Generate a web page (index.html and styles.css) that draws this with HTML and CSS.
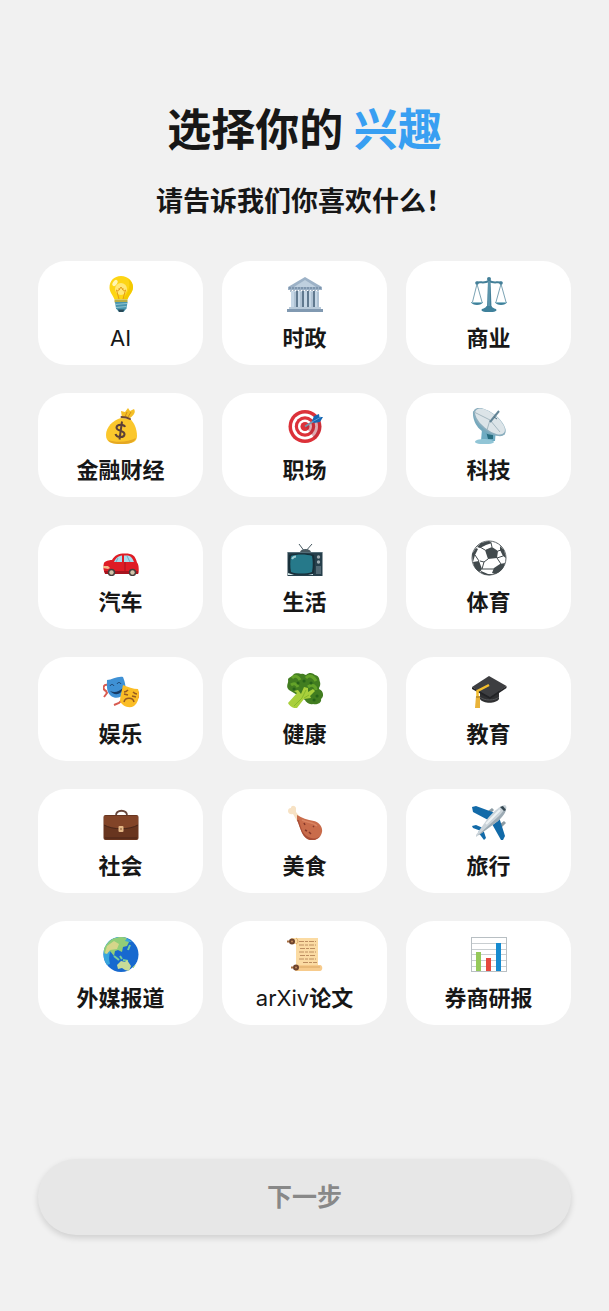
FILE: index.html
```
<!DOCTYPE html>
<html lang="zh-CN">
<head>
    <meta charset="UTF-8">
    <meta name="viewport" content="width=device-width, initial-scale=1.0">
    <title>选择你的兴趣</title>
    <link rel="stylesheet" href="styles.css">
</head>
<body>
    <main class="page">
        <header class="heading">
            <h1>选择你的 <span class="accent">兴趣</span></h1>
            <p>请告诉我们你喜欢什么！</p>
        </header>

        <div class="topics">
            <button type="button" class="topic">
                <svg viewBox="0 0 36 36" aria-hidden="true">
                    <path d="M18 0C11 0 6.500 5 6.500 11.500c0 5 3.500 7.500 5 12h13c1.500-4.500 5.500-7 5.500-12C30 5 25 0 18 0z" fill="#fdd515"/>
                    <path d="M25 3c3 5 1 13-5 20h4.500c1.500-4.500 5.500-7 5.500-12 0-3.500-2-6.500-5-8z" fill="#f3c900"/>
                    <ellipse cx="18" cy="13" rx="6" ry="6" fill="#ffe878"/>
                    <path d="M16 23l-2.500-9c2 2 3 0 2.500-2M20 23l2.500-9c-2 2-3 0-2.500-2M16 14l2-3 2 3" fill="none" stroke="#e59a16" stroke-width="1"/>
                    <ellipse cx="12" cy="7" rx="2" ry="3.500" transform="rotate(35 12 7)" fill="#fff6b5"/>
                    <path d="M11.500 23.500h13v3h-13z" fill="#b9ad45"/>
                    <path d="M12 26h12.500l-1 6.500-3 3.500h-4.500l-3-3.500z" fill="#4995ad"/>
                    <path d="M12 28.500l12-1M13 31.500l10.500-1" stroke="#91c5d2" stroke-width="1"/>
                    <path d="M15 33.500h6.500L20 36h-4z" fill="#294957"/>
                </svg>
                <span class="label"><span class="latin">AI</span></span>
            </button>
            <button type="button" class="topic">
                <svg viewBox="0 0 36 36" aria-hidden="true">
                    <path d="M18 1L1 11v3h34v-3z" fill="#9db2c7"/>
                    <path d="M18 4L7 11h22z" fill="#bfd0df"/>
                    <path d="M2 12h32M3 15h30" stroke="#617b94" stroke-width="1" stroke-dasharray="2 1"/>
                    <path d="M5 15h26v17H5z" fill="#60798f"/>
                    <path d="M4 15h5v17H4zM11 15h4v17h-4zM17 15h3v17h-3zM22 15h4v17h-4zM28 15h4v17h-4z" fill="#c6d7e6"/>
                    <path d="M8 16v15M14 16v15M25 16v15M31 16v15" stroke="#99aec2" stroke-width="1"/>
                    <path d="M2 31h32v2H2z" fill="#b8cada"/>
                    <path d="M0 33h36v3H0z" fill="#8199b1"/>
                </svg>
                <span class="label">时政</span>
            </button>
            <button type="button" class="topic">
                <svg viewBox="0 0 36 36" aria-hidden="true">
                    <path d="M6 8L1.500 26M6 8l5 18M30 8l-5 18M30 8l5 18" stroke="#7ba3b4" stroke-width="1" fill="none"/>
                    <path d="M0 26h12c-1 4-11 4-12 0zM24 26h12c-1 4-11 4-12 0z" fill="#3f819b"/>
                    <path d="M1 26.500h10M25 26.500h10" stroke="#8fbdcb" stroke-width="1"/>
                    <path d="M5 7c5-2 7 1 13-2 6 3 8 0 13 2" fill="none" stroke="#437f98" stroke-width="2"/>
                    <path d="M17 4h2.500l1 28h-4.500z" fill="#437f98"/>
                    <path d="M18 5v26" stroke="#75aabd" stroke-width="1"/>
                    <circle cx="18" cy="3" r="2" fill="#437f98"/>
                    <circle cx="6" cy="7" r="1.800" fill="#437f98"/>
                    <circle cx="30" cy="7" r="1.800" fill="#437f98"/>
                    <path d="M10.500 34c0-2 4-1 5-4h5c1 3 5 2 5 4 0 3-15 3-15 0z" fill="#3f819b"/>
                </svg>
                <span class="label">商业</span>
            </button>

            <button type="button" class="topic">
                <svg viewBox="0 0 36 36" aria-hidden="true">
                    <path d="M19 10L18 3l4 1 3-4 2 3 4-2c2 3 0 6-4 9z" fill="#f4bf27"/>
                    <path d="M22 9l2-5M25 9l3-5" stroke="#d18e18" stroke-width="1"/>
                    <path d="M18 10c-8 2-15 9-15 17 0 7 5 9 15 9 11 0 16-2 16-8 0-7-3-14-7-17z" fill="#fbc72c"/>
                    <path d="M5 32c8 3 21 2 28-2-2 5-7 6-15 6-7 0-11-1-13-4z" fill="#e5a823"/>
                    <path d="M18.500 9c3 0 6 .5 8.500 2" stroke="#704a35" stroke-width="2" stroke-linecap="round" fill="none"/>
                    <path d="M22 19c-1-3-8-3-8.500.5C13 23.500 22 22 21.500 26.500 21 30 13.500 30 12.500 26M19 13.500l-2.500 18" fill="none" stroke="#5d4037" stroke-width="2"/>
                </svg>
                <span class="label">金融财经</span>
            </button>
            <button type="button" class="topic">
                <svg viewBox="0 0 36 36" aria-hidden="true">
                    <circle cx="18" cy="18.500" r="16.500" fill="#dc3139"/>
                    <circle cx="18" cy="18.500" r="13" fill="#fff"/>
                    <circle cx="18" cy="18.500" r="10.200" fill="#dc3139"/>
                    <circle cx="18" cy="18.500" r="7" fill="#fff"/>
                    <circle cx="18" cy="18.500" r="4.500" fill="#dc3139"/>
                    <path d="M18 18l10 13 4-5c2-4 3-8 1-11l-6-2z" fill="#a52a3d" opacity=".4"/>
                    <path d="M18 18.500L30 11" stroke="#7894aa" stroke-width="2"/>
                    <path d="M25 13l2-5 5-2 .5 3H36l-3 5-6 1z" fill="#1667b2"/>
                    <path d="M25 14l9-5" stroke="#549bd6" stroke-width="1"/>
                </svg>
                <span class="label">职场</span>
            </button>
            <button type="button" class="topic">
                <svg viewBox="0 0 36 36" aria-hidden="true">
                    <path d="M11 21h14l-1 12H10z" fill="#6eabc2"/>
                    <path d="M15 23h7v8h-5z" fill="#276c7f"/>
                    <path d="M4 34c0-2 4-3 9-3s9 1 10 3c-1 3-18 3-19 0z" fill="#91c5d6"/>
                    <path d="M2 3c-1 13 9 27 29 24 2 0 3-1 3-2z" fill="#76a9bd"/>
                    <ellipse cx="18.500" cy="14" rx="19.500" ry="9" transform="rotate(39 18.500 14)" fill="#8baebe"/>
                    <ellipse cx="19" cy="13.500" rx="18" ry="8" transform="rotate(39 19 13.500)" fill="#dce4e8"/>
                    <path d="M3 4l16 8 10 12M19 12l-3 10" fill="none" stroke="#a6b8c1" stroke-width="1"/>
                    <path d="M19 14l9-11" stroke="#648596" stroke-width="2"/>
                    <path d="M23 9l3 2" stroke="#4b6f81" stroke-width="1"/>
                </svg>
                <span class="label">科技</span>
            </button>

            <button type="button" class="topic">
                <svg viewBox="0 0 36 36" aria-hidden="true">
                    <path d="M1 23c1-2 5-3 8-3 3-5 6-6.500 13-6.500 8 0 10 2 12 9 2 2 2 8 1.500 11H3C0 32 0 26 1 23z" fill="#df1c25"/>
                    <path d="M11 22c2-4 4-6 8-6.500V22zM21 15.500c6-.5 8 1 10 6.500H21z" fill="#a7dcec"/>
                    <path d="M15 18l-2 4M24 16l3 6" stroke="#6bafc6" stroke-width="1"/>
                    <path d="M0 26h5l2 2-2 1-5-1z" fill="#f3ba8a"/>
                    <path d="M1 31h34v3H2z" fill="#a7131e"/>
                    <path d="M22 22v9" stroke="#a7131e" stroke-width="1"/>
                    <circle cx="8.500" cy="32.500" r="3.700" fill="#443f3d"/>
                    <circle cx="8.500" cy="32.500" r="2.200" fill="#d2c3a9"/>
                    <circle cx="29.500" cy="32.500" r="3.700" fill="#443f3d"/>
                    <circle cx="29.500" cy="32.500" r="2.200" fill="#d2c3a9"/>
                </svg>
                <span class="label">汽车</span>
            </button>
            <button type="button" class="topic">
                <svg viewBox="0 0 36 36" aria-hidden="true">
                    <path d="M12 4l6 8 7-8" fill="none" stroke="#485961" stroke-width="1"/>
                    <path d="M13 12c1-4 10-4 11 0z" fill="#485961"/>
                    <path d="M.500 12h35v24H.500z" fill="#263f4b"/>
                    <path d="M1 12.500h34" stroke="#546d78" stroke-width="1"/>
                    <path d="M2 15c6-2 19-2 25 0 1 6 1 12 0 18-6 2-19 2-25 0-1-6-1-12 0-18z" fill="#172e38"/>
                    <path d="M4 16c5-2 16-2 21 0 1 5 1 11 0 16-5 2-16 2-21 0-1-5-1-11 0-16z" fill="#26798a"/>
                    <path d="M5 19c1-2 2-2.500 4-2.500" stroke="#9bcbd1" stroke-width="2" fill="none"/>
                    <path d="M29 26h5v8h-5z" fill="#526974"/>
                    <circle cx="31.500" cy="17" r="1.700" fill="#a0adb2"/>
                    <circle cx="31.500" cy="22" r="1.700" fill="#a0adb2"/>
                    <path d="M1 33l6 2H1zM21 35l5-1v1z" fill="#d9edef"/>
                </svg>
                <span class="label">生活</span>
            </button>
            <button type="button" class="topic">
                <svg viewBox="0 0 36 36" aria-hidden="true">
                    <circle cx="18" cy="18" r="17" fill="#fff" stroke="#60676a" stroke-width="1"/>
                    <path d="M14 10l7-3 6 4-1 7-9 1zM10 3l8-2 3 2-6 2-6 3-3-1zM1 14l4-6 2 1-3 6-2 7zM29 6l4 4 2 8-3-2-3-6zM2 22l6-1 3 8-2 3c-4-2-6-5-7-10zM23 28l6-4 5-1c-1 5-4 9-10 11l-3-1zM10 31l7 3 6 .5c-5 1.500-10 .5-13-2z" fill="#424a4d"/>
                    <path d="M14 10l-5-3M21 7l-1-4M27 11l3-1M26 18l4 6M17 19l-4 3-4-1M13 22l-2 7M26 18l6-2M4 15l4 6M11 29l12 0" fill="none" stroke="#424a4d" stroke-width="1"/>
                </svg>
                <span class="label">体育</span>
            </button>

            <button type="button" class="topic">
                <svg viewBox="0 0 36 36" aria-hidden="true">
                    <path d="M5 13c-5-1-6 4-2 6l1 2-3 4M20 27l-4 4-5 2M34 20c3 1 2 5 0 6" fill="none" stroke="#d85b50" stroke-width="2"/>
                    <path d="M4 8c5 0 10-4 16-3 2 5 4 12 1 17-3 4-9 5-13 2C3 20 4 13 4 8z" fill="#3f91d5"/>
                    <path d="M7 14c1-2 3-2 4 0M14 12c1-2 3-2 4 0" fill="none" stroke="#193d66" stroke-width="1"/>
                    <path d="M7 19c5 2 8 1 13-3-1 7-9 8-13 3z" fill="#173b65"/>
                    <path d="M20 13c5 2 10 4 15 4 2 5 1 13-4 17-5 3-12 0-14-5 0-5 2-10 3-16z" fill="#fbbd25"/>
                    <path d="M21 20c2 0 3-1 4-2M30 20c1 1 2 2 4 2M21 22l4 1M29 24l4 1M21 30c1-5 9-5 10 0" fill="none" stroke="#985c21" stroke-width="1.500"/>
                </svg>
                <span class="label">娱乐</span>
            </button>
            <button type="button" class="topic">
                <svg viewBox="0 0 36 36" aria-hidden="true">
                    <path d="M2 18c-4-4 0-7-1-10 0-3 4-3 5-5 3-3 7-1 8-1 3-1 4 1 5 1 4-4 8-1 9 0 5 1 4 5 5 7 1 4-1 5-1 7 5 2 5 8 2 10 1 4-4 6-8 5-4 1-7-2-8-4L7 21z" fill="#427d20"/>
                    <path d="M5 6c4-4 7 0 8 2M19 6c4-4 8-1 10 3M4 13c4-3 6 0 7 2M21 15c5-4 8 0 8 3" fill="none" stroke="#64a329" stroke-width="3"/>
                    <path d="M7 17h.1M11 11h.1M24 11h.1M30 24h.1M27 28h.1M17 9h.1" stroke="#286319" stroke-width="3" stroke-linecap="round"/>
                    <path d="M7 19l4-1 3 4 3-7 4 1v4l5-3 2 2-5 5 1 2-7 1-7 9c-3 1-8-2-9-5l9-10z" fill="#a9cf3c"/>
                    <path d="M19 18l-4 8-8 8M22 23l-5 3" fill="none" stroke="#87b92b" stroke-width="1"/>
                </svg>
                <span class="label">健康</span>
            </button>
            <button type="button" class="topic">
                <svg viewBox="0 0 36 36" aria-hidden="true">
                    <path d="M9 18v9c3 5 16 5 19 0V18z" fill="#2f3032"/>
                    <path d="M9 25c4 4 15 4 19 0" fill="none" stroke="#56585b" stroke-width="1"/>
                    <path d="M1 15L18 4l17.500 10L19 26z" fill="#3d3e41"/>
                    <path d="M1 15l18 10 16.500-11v2L19 27 1 17z" fill="#222326"/>
                    <path d="M18 13L6.500 19v11" fill="none" stroke="#f3bd2c" stroke-width="2.500"/>
                    <path d="M5 24h4v12H4z" fill="#e9b33a"/>
                    <path d="M5 25h4" stroke="#9c7422" stroke-width="1"/>
                </svg>
                <span class="label">教育</span>
            </button>

            <button type="button" class="topic">
                <svg viewBox="0 0 36 36" aria-hidden="true">
                    <path d="M13 12c-1-7 12-7 11 0" fill="none" stroke="#68463b" stroke-width="2"/>
                    <rect x=".5" y="11" width="35" height="25" rx="2" fill="#68351f"/>
                    <path d="M1 12h34v9c-9 5-25 5-34 0z" fill="#824428"/>
                    <path d="M1 21c9 5 25 5 34 0M2 34h32" fill="none" stroke="#482519" stroke-width="1"/>
                    <rect x="15.500" y="22" width="5" height="6" rx="1" fill="#e5b887"/>
                    <path d="M17 25h2" stroke="#80512e" stroke-width="1"/>
                </svg>
                <span class="label">社会</span>
            </button>
            <button type="button" class="topic">
                <svg viewBox="0 0 36 36" aria-hidden="true">
                    <path d="M1 7c0-2 1-3 3-3 0-3 4-3 5 0v4l5 6-4 3-4-7c-3 1-5-1-5-3z" fill="#f7e2c4"/>
                    <path d="M10 11c5 3 10 5 17 6 5 1 9 6 8 11-1 6-7 9-12 8-8-2-9-11-13-20z" fill="#c96c4b"/>
                    <path d="M12 16c2 9 4 16 12 18 4 1 8 0 10-3-2 4-7 6-11 5-8-2-9-11-13-20z" fill="#a84e37"/>
                    <path d="M17 19l1 2M18 26l2 1M22 28l2 2M26 22l1 1" stroke="#85372a" stroke-width="1.500"/>
                    <path d="M15 16c6 3 11 2 15 6" stroke="#d98361" stroke-width="1.500" fill="none"/>
                </svg>
                <span class="label">美食</span>
            </button>
            <button type="button" class="topic">
                <svg viewBox="0 0 36 36" aria-hidden="true">
                    <path d="M17 7l4-3 2 2-4 4zM29 20l4-3 2 2-4 4z" fill="#8b9ba4"/>
                    <path d="M1 3l4-1 19 7-5 8-17-9zM28 13l6 19-2 4h-2l-9-16zM1 22l4-1 7 3-2 3-8-3zM12 25l3 9-2 2-6-8z" fill="#126aa8"/>
                    <path d="M5 31l12-17C23 7 30 1 34 1c4 2-1 10-7 16L8 31l-3 2z" fill="#cbd4da"/>
                    <path d="M7 31L28 12c3-3 6-7 6-9 3 4-3 10-7 14L8 31z" fill="#9dabb4"/>
                    <path d="M29 3l3-1 3 4-2 1z" fill="#33454f"/>
                    <path d="M15 20L29 6" stroke="#eef2f4" stroke-width="2"/>
                </svg>
                <span class="label">旅行</span>
            </button>

            <button type="button" class="topic">
                <svg viewBox="0 0 36 36" aria-hidden="true">
                    <circle cx="18" cy="18.500" r="17.500" fill="#1769cf"/>
                    <path d="M7 28C3 14 13 5 29 6 23 0 13-1 6 5-1 12-1 22 4 29z" fill="#38a5dc"/>
                    <path d="M4 8C9 1 18 0 24 2l-2 3 4 1-2 4-4 1-1 5-4-2-3 1-1 5-4-5-5 3c-2-3-1-7 2-10z" fill="#91ce78"/>
                    <path d="M4 10l7-5 5 3-2 5-7 1-3 4-2-1z" fill="#d6d68a"/>
                    <path d="M11 20l5 4M17 20l2 3M20 24l5 1M25 14l2-5" stroke="#77ce9b" stroke-width="2"/>
                    <path d="M14 29l4-4 4 1 2-2 4 6-2 5-4-1-3-2-4 1z" fill="#c8dc98"/>
                    <path d="M30 32l2-3" stroke="#91ce78" stroke-width="1"/>
                </svg>
                <span class="label">外媒报道</span>
            </button>
            <button type="button" class="topic">
                <svg viewBox="0 0 36 36" aria-hidden="true">
                    <path d="M4 2h27v28H9V8H4z" fill="#fbdba3"/>
                    <path d="M9 29h24c3 0 3 6 0 6H8z" fill="#f7cb8c"/>
                    <path d="M9 8c3-1 2-5 0-6M9 31h24" fill="none" stroke="#daa765" stroke-width="1"/>
                    <circle cx="5" cy="5.500" r="3" fill="#6e432c"/>
                    <circle cx="9" cy="31.500" r="3" fill="#6e432c"/>
                    <path d="M0 5.500h2M4 31.500h2" stroke="#a97042" stroke-width="2"/>
                    <circle cx="5" cy="5.500" r="1" fill="#c28b5b"/>
                    <circle cx="9" cy="31.500" r="1" fill="#c28b5b"/>
                    <path d="M12 5.500h17M12 9h17M13 12.500h16M12 16h17M13 19.500h16M12 23h17M16 26.500h14" stroke="#bd8e61" stroke-width="1" stroke-dasharray="5 1 3 1"/>
                </svg>
                <span class="label"><span class="latin">arXiv</span>论文</span>
            </button>
            <button type="button" class="topic">
                <svg viewBox="0 0 36 36" aria-hidden="true">
                    <rect x=".5" y="1.500" width="35" height="34" fill="#fff" stroke="#b8bfc3"/>
                    <path d="M1 7.500h34M1 13.500h34M1 18.500h34M1 24.500h34M1 30.500h34" stroke="#c9ced1" stroke-width="1"/>
                    <path d="M5 16h5v19H5z" fill="#96c95b"/>
                    <path d="M15 22h5v13h-5z" fill="#e5483e"/>
                    <path d="M25 7h5v28h-5z" fill="#168bd0"/>
                </svg>
                <span class="label">券商研报</span>
            </button>
        </div>

        <button type="button" class="next" disabled>下一步</button>
    </main>
</body>
</html>
```
FILE: styles.css
```
* {
    margin: 0;
    padding: 0;
    box-sizing: border-box;
}

body {
    min-height: 100vh;
    background: #f1f1f1;
    color: #171717;
    font-family: Inter, 'Noto Sans CJK SC', sans-serif;
}

button {
    border: none;
    color: inherit;
    font-family: inherit;
    cursor: pointer;
}

.page {
    min-height: 100vh;
    display: flex;
    flex-direction: column;
    padding: 100px 38px 76px;
}

.heading {
    text-align: center;
    margin-bottom: 39px;
}

h1 {
    font-size: 44px;
    line-height: 60px;
    font-weight: 700;
    margin-bottom: 22px;
}

.accent {
    color: #389ff2;
}

.heading p {
    font-size: 27px;
    line-height: 40px;
    font-weight: 700;
}

.topics {
    display: grid;
    grid-template-columns: repeat(3, 1fr);
    gap: 28px 19px;
    margin-bottom: 48px;
}

.topic {
    display: flex;
    flex-direction: column;
    align-items: center;
    gap: 10px;
    padding: 15px 8px 11px;
    border-radius: 28px;
    background: #fff;
}

.topic svg {
    width: 36px;
    height: 36px;
}

.label {
    font-size: 22px;
    line-height: 32px;
    font-weight: 700;
    white-space: nowrap;
}

.latin {
    font-weight: 400;
}

.next {
    margin-top: auto;
    padding: 18px;
    border-radius: 38px;
    background: #e7e7e7;
    color: #888;
    font-size: 25px;
    line-height: 40px;
    font-weight: 700;
    box-shadow: 0 3px 6px rgba(0, 0, 0, 0.14);
}

.next:disabled {
    cursor: default;
}
```
